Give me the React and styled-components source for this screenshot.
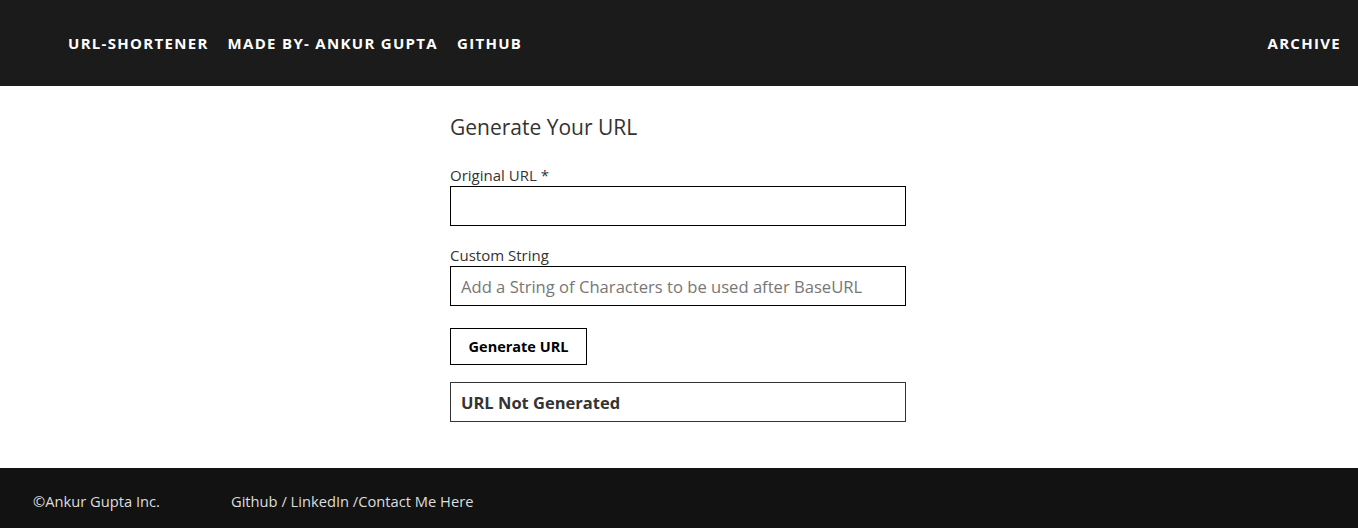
import React from 'react';
import styled, { createGlobalStyle } from 'styled-components';

const GlobalStyle = createGlobalStyle`
  body {
    margin: 0;
    font-family: 'Open Sans', 'Noto Sans', sans-serif;
    background: #fff;
    color: #333;
  }
`;

const Page = styled.div`
  display: flex;
  flex-direction: column;
  min-height: 528px;
`;

const Header = styled.header`
  height: 86px;
  background: #1b1b1b;
  display: flex;
  align-items: center;
  justify-content: space-between;
  padding: 0 17px 0 68px;
`;

const NavGroup = styled.nav`
  display: flex;
  gap: 19px;
`;

const NavLink = styled.a`
  color: #fff;
  font-size: 15px;
  font-weight: 700;
  letter-spacing: 1.3px;
  text-transform: uppercase;
  text-decoration: none;
`;

const Main = styled.main`
  flex: 1;
  display: flex;
  justify-content: center;
  padding: 27px 2px 46px 0;
`;

const Form = styled.form`
  width: 456px;
  display: flex;
  flex-direction: column;
`;

const Title = styled.h2`
  margin: 0 0 25px;
  font-size: 21px;
  font-weight: 500;
  color: #333;
  line-height: 28px;
`;

const Label = styled.label`
  font-size: 15px;
  color: #333;
  line-height: 18px;
  margin-bottom: 2px;
`;

const Input = styled.input`
  box-sizing: border-box;
  height: 40px;
  border: 1px solid #000;
  padding: 0 10px;
  font-family: inherit;
  font-size: 16.6px;
  color: #333;
  margin-bottom: ${p => p.$gap}px;
  &::placeholder {
    color: #777;
  }
`;

const Button = styled.button`
  align-self: flex-start;
  box-sizing: border-box;
  width: 137px;
  height: 37px;
  border: 1px solid #000;
  background: #fff;
  font-family: inherit;
  font-size: 14.5px;
  font-weight: 700;
  color: #000;
  margin-bottom: 17px;
`;

const Result = styled.div`
  box-sizing: border-box;
  height: 40px;
  border: 1px solid #333;
  display: flex;
  align-items: center;
  padding: 0 10px;
  font-size: 16.5px;
  font-weight: 700;
  color: #333;
`;

const Footer = styled.footer`
  height: 60px;
  background: #121212;
  display: flex;
  align-items: center;
  padding: 5px 0 0 33px;
  box-sizing: border-box;
  gap: 71px;
  color: #ddd;
  font-size: 14.7px;
`;

const App = () => (
  <Page>
    <GlobalStyle />
    <Header>
      <NavGroup>
        <NavLink href="#">URL-Shortener</NavLink>
        <NavLink href="#">Made By- Ankur Gupta</NavLink>
        <NavLink href="#">Github</NavLink>
      </NavGroup>
      <NavLink href="#">Archive</NavLink>
    </Header>
    <Main>
      <Form onSubmit={e => e.preventDefault()}>
        <Title>Generate Your URL</Title>
        <Label>Original URL *</Label>
        <Input $gap={20} />
        <Label>Custom String</Label>
        <Input $gap={22} placeholder="Add a String of Characters to be used after BaseURL" />
        <Button type="submit">Generate URL</Button>
        <Result>URL Not Generated</Result>
      </Form>
    </Main>
    <Footer>
      <span>©Ankur Gupta Inc.</span>
      <span>Github / LinkedIn /Contact Me Here</span>
    </Footer>
  </Page>
);

export default App;
